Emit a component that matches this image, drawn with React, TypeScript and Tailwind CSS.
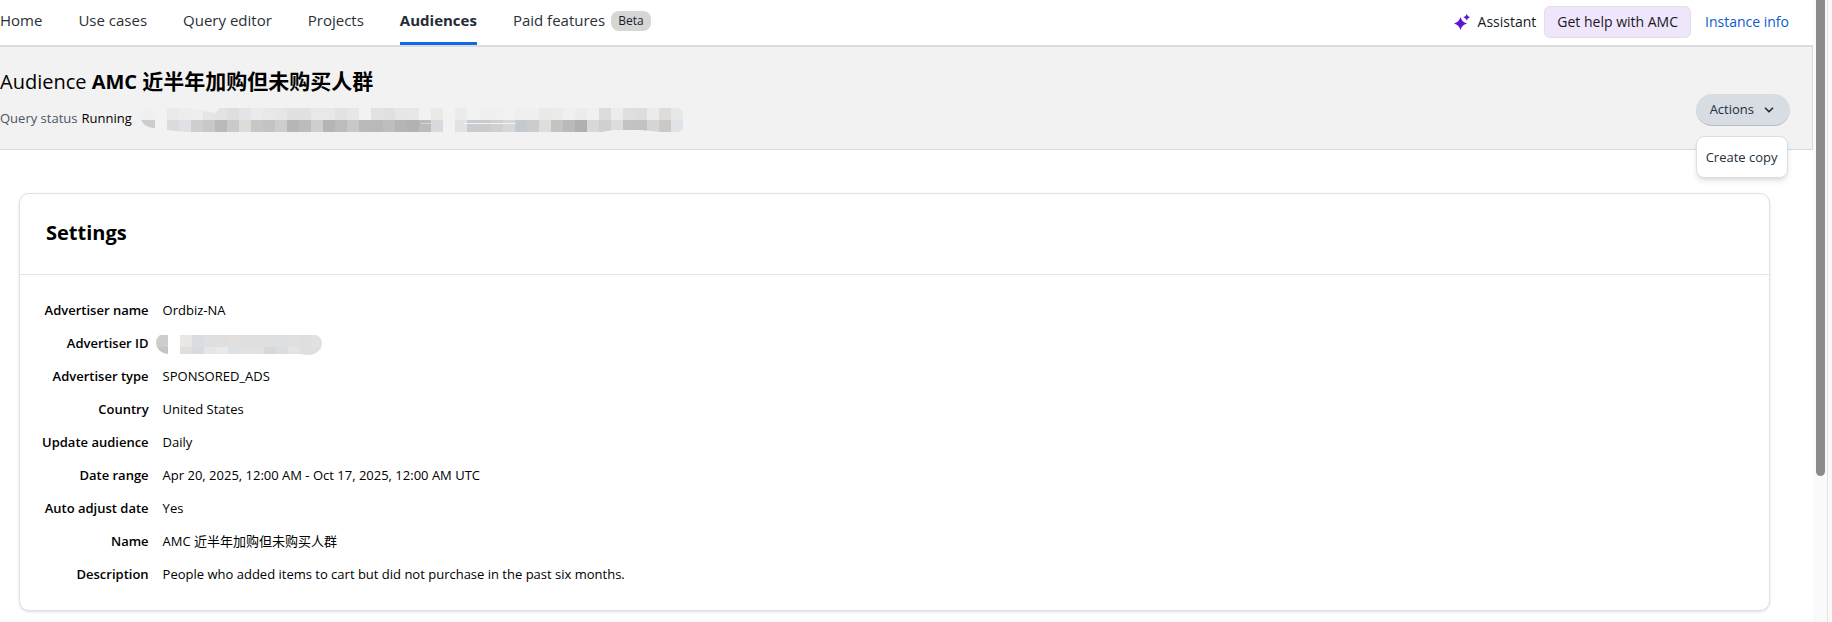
import { useState } from "react";
import { ChevronDown } from "lucide-react";

const navItems = ["Home", "Use cases", "Query editor", "Projects", "Audiences"];

const CELL = 12;

// one colour per mosaic cell, "" leaves the background visible
const statusMask = {
  top: [
    "#eaeaea", "#ededed", "#eeeeee", "#e6e6e6", "#e3e3e3", "#dfdedc", "#e2e4e7", "#ebebea", "#e8e8e8", "#e6e6e6",
    "#e1e1e1", "#e1e1e1", "#e8e8e8", "#e8e8e8", "#e2e2e0", "#e7e7e7", "", "#e2e2e0", "#dfe1e0", "#e5e6e7",
    "#e5e7e9", "", "#e9e9e7", "", "#ebebeb", "#f1f3f3", "#f0f0f0", "#f0f0f0", "#f2f2f2", "#edf0ef",
    "#eff1f0", "#eae9e7", "#ebebeb", "#f0f0ef", "#ebecee", "#f2f0ef", "#dcdcdc", "#eaedec", "#dfdfdf", "#dddddd",
    "#ebebeb", "#dddcda", "#e6e8e7",
  ],
  bottom: [
    "#d9dbdd", "#dfe1e4", "#cfcfcf", "#c8c8c8", "#bababa", "#cacaca", "#dddcda", "#c7c7c7", "#c3c3c2", "#cdcdcd",
    "#b8b5b6", "#babcbe", "#cecece", "#b3b5b7", "#bdbcba", "#c8c8c8", "#bababa", "#bbb9b7", "#bebebe", "#b7b5b3",
    "#b0b2b4", "#babcba", "#d8dadd", "", "#e0e2e4", "#c9cccf", "#cacbce", "#cfd1d0", "#d6d8da", "#c4cacf",
    "#cacccf", "#dededc", "#c5c4c2", "#b8bbb9", "#b1afb0", "#d6d8da", "#d0d0d0", "#dfdddc", "#c2c3c4", "#c4c2c1",
    "#d5d6d8", "#cdc8c5", "#dfe3e7",
  ],
};

const idMask = {
  top: ["#e9e6e4", "#d9dce0", "#dddfe1", "#dfdfdf", "#e2dfdd", "#dfdfe0", "#dfdfdf", "#dedfe1", "#dddfe0", "#e0e0e0", "#dfdfdf", "#e1e1e1"],
  bottom: ["#e2dedb", "#d7dbde", "#e6e6e6", "#e9e9e8", "#dee1e4", "#e4e2e0", "#e1e1e1", "#d9d8d7", "#dadde1", "#e5e4e3", "#dfdfe0", "#dfdfdf"],
};

function StatusMask() {
  return (
    <svg width="542" height="24" viewBox="0 0 542 24" className="shrink-0" aria-hidden="true">
      <defs>
        <clipPath id="statusClip">
          <path d="M26 0H536Q542 0 542 6V18Q542 24 536 24H520L500 22H472L460 24H44L26 22Z" />
        </clipPath>
      </defs>
      <path d="M0 12H14V20Q4 20 0 12Z" fill="#c9cdd0" />
      <path d="M0 12Q-1 4 3 0H14V12Z" fill="#f0f0f0" />
      <g clipPath="url(#statusClip)">
        {statusMask.top.map((c, i) => c && <rect key={i} x={26 + i * CELL} y={0} width={CELL} height={CELL} fill={c} />)}
        {statusMask.bottom.map((c, i) => c && <rect key={i} x={26 + i * CELL} y={CELL} width={CELL} height={CELL} fill={c} />)}
      </g>
      <path d="M50 0L75 5L78 0Z" fill="#f2f2f2" />
      <rect x="323" y="15" width="52" height="1" fill="#f2f2f2" />
      <rect x="280" y="15" width="10" height="1" fill="#d4d5d5" />
    </svg>
  );
}

function IdMask() {
  return (
    <svg width="166" height="20" viewBox="0 0 166 20" className="block" aria-hidden="true">
      <defs>
        <clipPath id="idClip">
          <path d="M24 0H160Q166 2 166 9Q165 18 154 20Q149 20 144 19H24Z" />
        </clipPath>
      </defs>
      <path d="M4 0H12V12H1Q-2 5 4 0Z" fill="#cdcdcc" />
      <path d="M1 12H12V19Q4 18 1 12Z" fill="#c4c4c4" />
      <g clipPath="url(#idClip)">
        {idMask.top.map((c, i) => <rect key={i} x={24 + i * CELL} y={0} width={CELL} height={CELL} fill={c} />)}
        {idMask.bottom.map((c, i) => <rect key={i} x={24 + i * CELL} y={CELL} width={CELL} height={CELL} fill={c} />)}
      </g>
    </svg>
  );
}

const settings = [
  { label: "Advertiser name", value: "Ordbiz-NA" },
  { label: "Advertiser ID", value: null },
  { label: "Advertiser type", value: "SPONSORED_ADS" },
  { label: "Country", value: "United States" },
  { label: "Update audience", value: "Daily" },
  { label: "Date range", value: "Apr 20, 2025, 12:00 AM - Oct 17, 2025, 12:00 AM UTC" },
  { label: "Auto adjust date", value: "Yes" },
  { label: "Name", value: "AMC 近半年加购但未购买人群" },
  { label: "Description", value: "People who added items to cart but did not purchase in the past six months." },
];

export default function App() {
  const [isOpen, setIsOpen] = useState(true);

  return (
    <div className="flex min-h-screen bg-white text-black font-['Open_Sans','Noto_Sans_CJK_SC',sans-serif]">
      <div className="min-w-0 flex-1">
        <header className="flex h-[47px] justify-between border-b-2 border-[#dcdcdc]">
          <nav className="flex gap-9 text-[15px] text-[#2b3038]">
            {navItems.map(item => (
              <a
                key={item}
                href="#"
                className={`flex h-[45px] items-center border-b-3 pb-px ${item === "Audiences" ? "border-[#0f6bea] font-bold text-[#232b37]" : "border-transparent"}`}
              >
                {item}
              </a>
            ))}
            <a href="#" className="flex h-[45px] items-center gap-[6px] border-b-3 border-transparent pb-px">
              Paid features
              <span className="flex h-5 items-center rounded-lg bg-[#d6d6d5] px-[7px] text-xs text-[#161d29]">Beta</span>
            </a>
          </nav>
          <div className="flex items-center pr-6 pb-px text-sm">
            <button type="button" className="flex items-center gap-2 text-[#16191f]">
              <svg width="16" height="16" viewBox="0 0 16 16" fill="#5f15d8" aria-hidden="true">
                <path d="M6.5 3Q7.9 8.1 13 9.5Q7.9 10.9 6.5 16Q5.1 10.9 0 9.5Q5.1 8.1 6.5 3Z" />
                <path d="M12.7 0Q13.4 2.6 16 3.3Q13.4 4 12.7 6.6Q12 4 9.4 3.3Q12 2.6 12.7 0Z" />
              </svg>
              Assistant
            </button>
            <button type="button" className="ml-2 h-8 rounded-md border border-[#e2e0e6] bg-[#f0e6fb] px-3 text-[#16191f]">
              Get help with AMC
            </button>
            <a href="#" className="ml-[14px] text-[#0b5ccf]">Instance info</a>
          </div>
        </header>

        <section className="flex h-[103px] items-center justify-between border-r border-b border-[#d9d9d9] bg-[#f2f2f2] pr-[22px]">
          <div className="self-start pt-5">
            <h1 className="text-xl leading-7">
              Audience <b>AMC <span className="text-[21px]">近半年加购但未购买人群</span></b>
            </h1>
            <div className="mt-3 flex h-6 items-center text-[13px]">
              <span className="pb-[2px] text-[#4b5563]">Query status</span>
              <span className="ml-1 mr-[9px] pb-[2px]">Running</span>
              <StatusMask />
            </div>
          </div>
          <div className="relative pt-6">
            <button
              type="button"
              aria-expanded={isOpen}
              onClick={() => setIsOpen(!isOpen)}
              className="flex h-8 items-center gap-2 rounded-full border-b border-[#b6bcc4] bg-[#d8dde4] px-[14px] text-[13px] text-[#232f3e]"
            >
              Actions
              <ChevronDown size={14} strokeWidth={3} />
            </button>
            {isOpen &&
              <div className="absolute top-full left-0 mt-[10px] rounded-lg border border-[#dcdfe3] bg-white shadow-md">
                <button type="button" className="block h-10 px-[9px] pt-[2px] text-[13px] whitespace-nowrap text-[#232f3e]">Create copy</button>
              </div>
            }
          </div>
        </section>

        <main className="pt-[43px] pr-[43px] pb-3 pl-[19px]">
          <section className="rounded-[10px] border border-[#dfe1e5] bg-white shadow-sm">
            <h2 className="flex h-[81px] items-center border-b border-[#e3e3ea] px-[26px] pb-[2px] text-xl font-bold">Settings</h2>
            <dl className="grid grid-cols-[auto_1fr] gap-x-[14px] px-[22px] pt-[19px] pb-[19px] text-[13px] leading-[33px]">
              {settings.map(s => (
                <div key={s.label} className="contents">
                  <dt className="text-right font-semibold">{s.label}</dt>
                  <dd className="flex h-[33px] items-center">
                    {s.value ?? <span className="-ml-[7px] pt-[3px]"><IdMask /></span>}
                  </dd>
                </div>
              ))}
            </dl>
          </section>
        </main>
      </div>

      {/* scroll track */}
      <div className="flex w-[19px] shrink-0 bg-[#fafafa]">
        <div className="w-[15px] border-r border-[#e3e3e3] pl-[3px]">
          <div className="h-[476px] w-[9px] rounded-b-full bg-[#8b8b8b]" />
        </div>
      </div>
    </div>
  );
}
